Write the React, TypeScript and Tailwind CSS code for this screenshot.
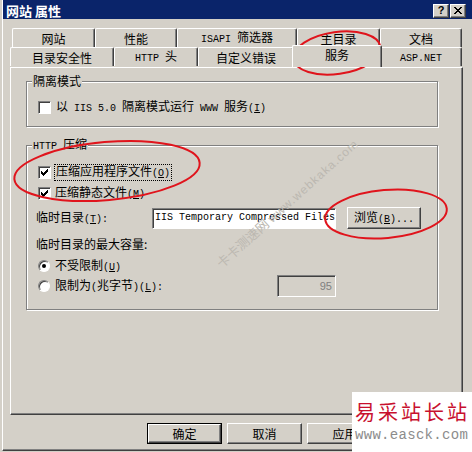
import React from "react";

const raised =
  "border border-t-white border-l-white border-r-[#404040] border-b-[#404040] shadow-[inset_-1px_-1px_0_#808080]";
const sunken =
  "border border-t-[#808080] border-l-[#808080] border-r-white border-b-white shadow-[inset_1px_1px_0_#404040]";
const etched = "border border-[#808080] shadow-[inset_1px_1px_0_#fff,1px_1px_0_#fff]";

function acc(r: string) {
  const i = r.indexOf("&");
  if (i < 0) return r;
  return (
    <>
      {r.slice(0, i)}
      <span className="underline underline-offset-1">{r[i + 1]}</span>
      {r.slice(i + 2)}
    </>
  );
}

// SimSun-like: half-width latin, full-width CJK
function Txt({ s }: { s: string }) {
  const runs = s.split(/([\x20-\x7e]+)/).filter((r) => r.length > 0);
  return (
    <span className="whitespace-pre">
      {runs.map((r, i) =>
        /^[\x20-\x7e]+$/.test(r) ? (
          <span key={i} className="font-['Liberation_Mono',monospace] text-[10px]">
            {acc(r)}
          </span>
        ) : (
          <span key={i}>{r}</span>
        )
      )}
    </span>
  );
}

function Check({ checked }: { checked?: boolean }) {
  return (
    <div className={`w-[13px] h-[13px] bg-white shrink-0 flex items-center justify-center ${sunken}`}>
      {checked && (
        <svg width="7" height="7" viewBox="0 0 7 7">
          <path d="M0 2h1v1h1v1h1v-1h1v-1h1v-1h1v-1h1v3h-1v1h-1v1h-1v1h-1v1h-1v-1h-1v-1h-1z" fill="#000" />
        </svg>
      )}
    </div>
  );
}

function Radio({ checked }: { checked?: boolean }) {
  return (
    <div className="w-[12px] h-[12px] rounded-full bg-white shrink-0 flex items-center justify-center border border-t-[#808080] border-l-[#808080] border-r-white border-b-white shadow-[inset_1px_1px_0_#404040]">
      {checked && <div className="w-[4px] h-[4px] rounded-full bg-black" />}
    </div>
  );
}

function Tab({ label, w }: { label: string; w: string }) {
  return (
    <div
      className={`${w} h-[19px] shrink-0 flex items-center justify-center pt-[1px] border-t border-l border-t-white border-l-white border-r border-r-[#404040] shadow-[inset_-1px_0_0_#808080] rounded-t-[2px]`}
    >
      <Txt s={label} />
    </div>
  );
}

function Btn({ label, def }: { label: string; def?: boolean }) {
  if (def)
    return (
      <div className="w-[75px] h-[21px] border border-black">
        <div className={`w-full h-full flex items-center justify-center ${raised}`}>{label}</div>
      </div>
    );
  return <div className={`w-[75px] h-[21px] flex items-center justify-center ${raised}`}>{label}</div>;
}

export default function App() {
  return (
    <div className="relative w-[472px] h-[452px] bg-[#d4d0c8] pl-[2px] pb-[1px] overflow-hidden text-[12px] leading-[14px] text-black font-['Noto_Sans_CJK_SC','Noto_Sans',sans-serif]">
      <div className="h-full flex flex-col border-l border-l-white border-b border-b-[#404040] shadow-[inset_0_-1px_0_#808080]">
        {/* title bar */}
        <div className="h-[19px] bg-[#0a246a] flex items-center justify-between pl-[3px] pr-[6px] pt-[2px]">
          <span className="text-white font-bold text-[13px]">网站 属性</span>
          <div className="flex gap-[1px]">
            <div className={`w-[16px] h-[14px] flex items-center justify-center font-bold text-[11px] leading-none font-['Liberation_Sans',sans-serif] ${raised} bg-[#d4d0c8]`}>
              ?
            </div>
            <div className={`w-[16px] h-[14px] flex items-center justify-center bg-[#d4d0c8] ${raised}`}>
              <svg width="8" height="7" viewBox="0 0 8 7">
                <path d="M0 0L7 7M1 0L8 7M7 0L0 7M8 0L1 7" stroke="#000" strokeWidth="1" />
              </svg>
            </div>
          </div>
        </div>

        {/* tabs */}
        <div className="mt-[9px]">
          <div className="flex pl-[9px]">
            <Tab label="网站" w="w-[83px]" />
            <Tab label="性能" w="w-[82px]" />
            <Tab label="ISAPI 筛选器" w="w-[120px]" />
            <Tab label="主目录" w="w-[83px]" />
            <Tab label="文档" w="w-[82px]" />
          </div>
          <div className="flex pl-[7px]">
            <Tab label="目录安全性" w="w-[104px]" />
            <Tab label="HTTP 头" w="w-[84px]" />
            <Tab label="自定义错误" w="w-[96px]" />
            <div className="w-[90px] -mx-[2px] -mt-[2px] h-[22px] relative z-10 bg-[#d4d0c8] flex justify-center pt-[2px] border-t border-l border-t-white border-l-white border-r border-r-[#404040] shadow-[inset_-1px_0_0_#808080] rounded-t-[2px]">
              服务
            </div>
            <Tab label="ASP.NET" w="w-[82px]" />
          </div>
        </div>

        {/* panel */}
        <div className={`ml-[7px] w-[453px] h-[348px] px-[15px] pt-[6px] ${raised}`}>
          <fieldset className={`w-[412px] ${etched}`}>
            <legend className="ml-[5px] px-[1px] bg-[#d4d0c8] leading-[14px]">隔离模式</legend>
            <div className="pt-[12px] pb-[12px] pl-[11px]">
              <div className="h-[14px] flex items-center gap-[5px]">
                <Check />
                <Txt s="以 IIS 5.0 隔离模式运行 WWW 服务(&I)" />
              </div>
            </div>
          </fieldset>

          <fieldset className={`mt-[10px] w-[412px] ${etched}`}>
            <legend className="ml-[5px] px-[1px] bg-[#d4d0c8] leading-[14px]">
              <Txt s="HTTP 压缩" />
            </legend>
            <div className="pb-[12px]">
              <div className="mt-[11px] h-[14px] pl-[11px] flex items-center gap-[3px]">
                <Check checked />
                <span className="border border-dotted border-black px-[1px] leading-[12px]">
                  <Txt s="压缩应用程序文件(&O)" />
                </span>
              </div>
              <div className="mt-[7px] h-[14px] pl-[11px] flex items-center gap-[4px]">
                <Check checked />
                <Txt s="压缩静态文件(&M)" />
              </div>
              <div className="mt-[7px] h-[22px] flex items-center">
                <div className="w-[125px] pl-[9px]">
                  <Txt s="临时目录(&T):" />
                </div>
                <div className={`w-[184px] h-[21px] bg-white overflow-hidden whitespace-nowrap flex items-center pl-[2px] font-['Liberation_Mono',monospace] text-[10px] ${sunken}`}>
                  IIS Temporary Compressed Files
                </div>
                <div className={`ml-[11px] w-[74px] h-[22px] flex items-center justify-center ${raised}`}>
                  <Txt s="浏览(&B)..." />
                </div>
              </div>
              <div className="mt-[8px] h-[14px] pl-[9px] flex items-center">临时目录的最大容量:</div>
              <div className="mt-[8px] h-[14px] pl-[11px] flex items-center gap-[5px]">
                <Radio checked />
                <Txt s="不受限制(&U)" />
              </div>
              <div className="mt-[2px] h-[22px] flex items-center">
                <div className="w-[250px] pl-[11px] flex items-center gap-[5px]">
                  <Radio />
                  <Txt s="限制为(兆字节)(&L):" />
                </div>
                <div className={`w-[59px] h-[22px] flex items-center justify-end pr-[3px] text-[#808080] font-['Liberation_Sans',sans-serif] text-[11px] ${sunken}`}>
                  95
                </div>
              </div>
            </div>
          </fieldset>
        </div>

        {/* dialog buttons */}
        <div className="mt-[8px] pl-[144px] flex gap-[5px]">
          <Btn label="确定" def />
          <Btn label="取消" />
          <Btn label="应用" />
        </div>
      </div>

      {/* diagonal site watermark */}
      <div className="absolute left-[190px] top-[196px] w-[195px] text-center -rotate-[42deg] text-[13px] text-[#bcb8b1] whitespace-nowrap">
        卡卡测速网 <span className="font-['Liberation_Sans',sans-serif] text-[12px] tracking-[1px]">www.webkaka.com</span>
      </div>

      {/* red annotation circles */}
      <svg className="absolute left-0 top-0 pointer-events-none" width="472" height="452" viewBox="0 0 472 452">
        <ellipse cx="337" cy="53" rx="44" ry="21" transform="rotate(-8 337 53)" fill="none" stroke="#e0141c" strokeWidth="2" />
        <ellipse cx="107" cy="171" rx="93" ry="29" transform="rotate(-5 107 171)" fill="none" stroke="#e0141c" strokeWidth="2" />
        <ellipse cx="386" cy="214" rx="61" ry="24" transform="rotate(-5 386 214)" fill="none" stroke="#e0141c" strokeWidth="2" />
      </svg>

      {/* corner badge */}
      <div className="absolute left-[352px] top-[392px] w-[120px] h-[60px] bg-white pl-[3px] pt-[9px]">
        <div className="text-[20px] leading-[22px] tracking-[3px] text-[#c8102e]">易采站长站</div>
        <div className="mt-[5px] font-['Liberation_Mono',monospace] text-[14px] leading-[14px] text-[#8c8c8c] tracking-[0.3px]">
          www.easck.com
        </div>
      </div>
    </div>
  );
}
